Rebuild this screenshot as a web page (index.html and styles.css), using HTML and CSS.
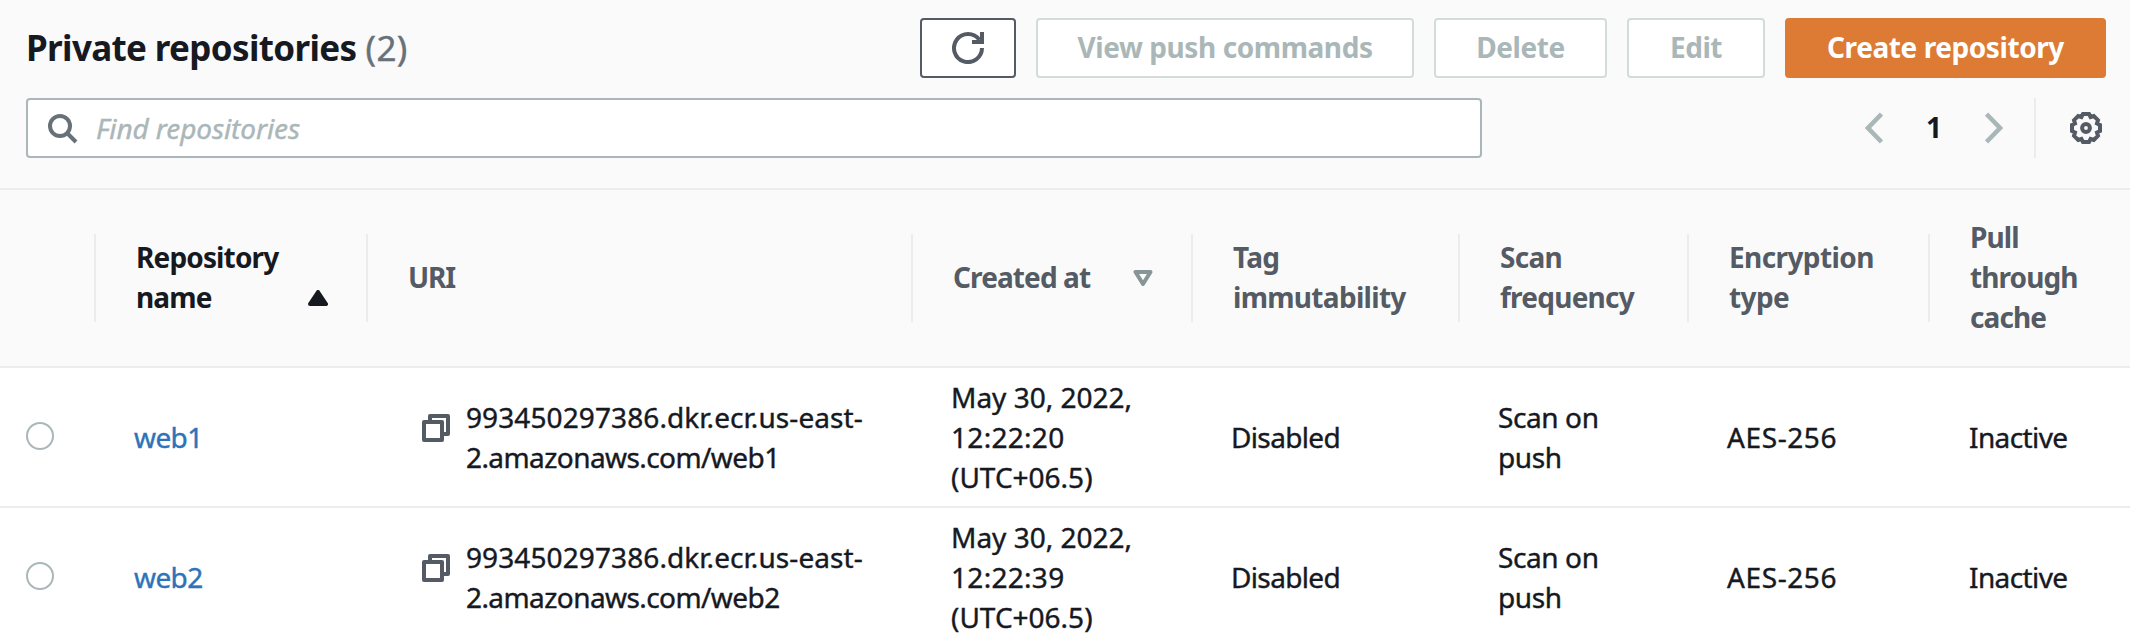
FILE: index.html
```
<!DOCTYPE html>
<html lang="en">
<head>
<meta charset="utf-8">
<title>Private repositories</title>
<link rel="stylesheet" href="styles.css">
</head>
<body>
<section class="panel">
  <header class="panel-header">
    <div class="title-row">
      <h1 class="title"><span class="title-name">Private repositories</span> <span class="count">(2)</span></h1>
      <div class="actions">
        <button class="btn btn-icon" aria-label="Refresh"><svg width="32" height="32" viewBox="0 0 16 16" fill="none" stroke="#545b64" stroke-width="2"><path d="M10 5h5V0"/><path d="M15 8a7 7 0 1 1-1.300-4.050"/></svg></button>
        <button class="btn btn-view">View push commands</button>
        <button class="btn btn-delete">Delete</button>
        <button class="btn btn-edit">Edit</button>
        <button class="btn btn-primary">Create repository</button>
      </div>
    </div>
    <div class="tools-row">
      <label class="search">
        <svg width="32" height="32" viewBox="0 0 16 16" fill="none" stroke="#687078" stroke-width="2"><circle cx="7" cy="7" r="5"/><path d="M15 15l-4.500-4.500"/></svg>
        <span class="placeholder">Find repositories</span>
      </label>
      <div class="pager">
        <svg class="prev" width="18" height="32" viewBox="0 0 18 32" fill="none" stroke="#aab7b8" stroke-width="4.600"><path d="M16.500 2L3 16l13.500 14"/></svg>
        <span class="page">1</span>
        <svg class="next" width="18" height="32" viewBox="0 0 18 32" fill="none" stroke="#aab7b8" stroke-width="4.600"><path d="M1.500 2L15 16 1.500 30"/></svg>
        <span class="pager-line"></span>
        <svg class="gear" width="32" height="32" viewBox="-16 -16 32 32" fill="none" stroke="#545b64" stroke-width="4"><path d="M14-3V3L11 4.600 12 7.800 7.800 12 4.600 11 3 14H-3L-4.600 11-7.800 12-12 7.800-11 4.600-14 3V-3L-11-4.600-12-7.800-7.800-12-4.600-11-3-14H3L4.600-11 7.800-12 12-7.800 11-4.600z"/><circle r="3.900"/></svg>
      </div>
    </div>
  </header>
  <div class="row head">
    <div class="cell"></div>
    <div class="cell sorted"><span class="h-name">Repository<br>name</span><svg class="caret-up" width="20" height="16" viewBox="0 0 20 16"><path d="M10 2l8 12H2z" fill="#16191f" stroke="#16191f" stroke-width="4" stroke-linejoin="round"/></svg></div>
    <div class="cell"><span class="h-uri">URI</span></div>
    <div class="cell"><span class="h-created">Created at</span><svg class="caret-down" width="20" height="16" viewBox="0 0 20 16"><path d="M2.500 2h15L10 14z" fill="none" stroke="#879596" stroke-width="4" stroke-linejoin="round"/></svg></div>
    <div class="cell"><span class="h-tag">Tag<br>immutability</span></div>
    <div class="cell"><span class="h-scan">Scan<br>frequency</span></div>
    <div class="cell"><span class="h-enc">Encryption<br>type</span></div>
    <div class="cell"><span class="h-pull">Pull<br>through<br>cache</span></div>
  </div>
  <div class="row">
    <div class="cell"><span class="radio"></span></div>
    <div class="cell"><a class="link">web1</a></div>
    <div class="cell uri"><svg width="28" height="28" viewBox="0 0 28 28" fill="none" stroke="#545b64" stroke-width="4" stroke-linejoin="round"><path d="M8 6V2h18v18h-4"/><path d="M2 8h18v18H2z"/></svg><span class="t-uri">993450297386.dkr.ecr.us-east-<br><span class="t-host">2.amazonaws.com/web1</span></span></div>
    <div class="cell"><span class="t-date">May 30, 2022,<br><span class="t-time">12:22:20</span><br>(UTC+06.5)</span></div>
    <div class="cell"><span class="t-tag">Disabled</span></div>
    <div class="cell"><span class="t-scan">Scan on<br>push</span></div>
    <div class="cell"><span class="t-enc">AES-256</span></div>
    <div class="cell"><span class="t-pull">Inactive</span></div>
  </div>
  <div class="row">
    <div class="cell"><span class="radio"></span></div>
    <div class="cell"><a class="link">web2</a></div>
    <div class="cell uri"><svg width="28" height="28" viewBox="0 0 28 28" fill="none" stroke="#545b64" stroke-width="4" stroke-linejoin="round"><path d="M8 6V2h18v18h-4"/><path d="M2 8h18v18H2z"/></svg><span class="t-uri">993450297386.dkr.ecr.us-east-<br><span class="t-host">2.amazonaws.com/web2</span></span></div>
    <div class="cell"><span class="t-date">May 30, 2022,<br><span class="t-time">12:22:39</span><br>(UTC+06.5)</span></div>
    <div class="cell"><span class="t-tag">Disabled</span></div>
    <div class="cell"><span class="t-scan">Scan on<br>push</span></div>
    <div class="cell"><span class="t-enc">AES-256</span></div>
    <div class="cell"><span class="t-pull">Inactive</span></div>
  </div>
</section>
</body>
</html>
```
FILE: styles.css
```
* { box-sizing: border-box; }
body {
  margin: 0;
  height: 640px;
  overflow: hidden;
  background: #fff;
  color: #16191f;
  font: 28px/40px "Noto Sans", sans-serif;
}
svg { display: block; flex: none; }
.panel-header {
  height: 190px;
  padding: 18px 24px 0 26px;
  background: #fafafa;
  border-bottom: 2px solid #eaeded;
}
.title-row { display: flex; justify-content: space-between; height: 60px; }
.title { margin: 0; font-size: 35px; line-height: 60px; font-weight: 700; white-space: nowrap; }
.title-name { letter-spacing: -0.65px; }
.count { color: #687078; font-weight: 400; letter-spacing: 0.3px; -webkit-text-stroke: 0.4px; }
.actions { display: flex; gap: 20px; }
.btn {
  display: flex;
  align-items: center;
  justify-content: center;
  height: 60px;
  padding: 0 0 2px;
  background: #fff;
  border: 2px solid #d5dbdb;
  border-radius: 4px;
  color: #aab7b8;
  font: 700 28px/40px "Noto Sans", sans-serif;
  letter-spacing: -0.42px;
  white-space: nowrap;
}
.btn-icon { width: 96px; padding: 0; border-color: #545b64; }
.btn-view { width: 378px; }
.btn-delete { width: 173px; }
.btn-edit { width: 138px; }
.btn-primary { width: 321px; background: #dd7a33; border-color: #dd7a33; color: #fff; }
.tools-row { display: flex; justify-content: space-between; margin-top: 20px; }
.search {
  display: flex;
  align-items: center;
  gap: 18px;
  width: 1456px;
  height: 60px;
  padding: 0 18px;
  background: #fff;
  border: 2px solid #aab7b8;
  border-radius: 4px;
}
.placeholder { color: #aab7b8; font-style: italic; letter-spacing: -0.1px; -webkit-text-stroke: 0.4px; }
.pager { display: flex; align-items: center; height: 60px; padding-right: 4px; }
.page { width: 102px; padding-bottom: 2px; text-align: center; font-weight: 700; }
.pager-line { width: 2px; height: 60px; margin: 0 34px 0 31px; background: #eaeded; }
.row {
  display: grid;
  grid-template-columns: 96px 272px 545px 280px 267px 229px 241px 200px;
  height: 140px;
  border-bottom: 2px solid #eaeded;
  -webkit-text-stroke: 0.4px;
}
.cell { display: flex; align-items: center; padding: 0 0 0 38px; white-space: nowrap; }
.cell:first-child { padding-left: 26px; }
.head {
  height: 178px;
  align-items: center;
  background: #fafafa;
  color: #545b64;
  font-weight: 700;
  -webkit-text-stroke: 0;
}
.head .cell { height: 88px; padding-left: 40px; border-right: 2px solid #eaeded; }
.head .cell:last-child { border-right: 0; }
.head .cell span { margin-top: -2px; }
.head .sorted { color: #16191f; }
.caret-up { margin: 40px 0 0 auto; }
.caret-down { margin-left: auto; }
.sorted { padding-right: 38px; }
.head .cell:nth-child(4) { padding-right: 38px; }
.h-name { letter-spacing: -0.85px; }
.h-uri { letter-spacing: -1.2px; }
.h-created { letter-spacing: -0.9px; }
.h-tag { letter-spacing: -0.7px; }
.h-scan { letter-spacing: -0.75px; }
.h-enc { letter-spacing: -0.6px; }
.h-pull { letter-spacing: -0.9px; }
.radio { width: 28px; height: 28px; margin-bottom: 2px; border: 2px solid #aab7b8; border-radius: 50%; }
.link { color: #2e73b8; letter-spacing: -0.6px; }
.uri { gap: 16px; padding-left: 54px; }
.uri svg { margin-bottom: 18px; }
.t-uri { letter-spacing: 0.1px; }
.t-host { letter-spacing: -0.58px; }
.t-time { letter-spacing: 0.3px; }
.t-tag { letter-spacing: -0.65px; }
.t-scan { letter-spacing: -0.4px; }
.t-enc { letter-spacing: 0.6px; }
.t-pull { padding-left: 1px; letter-spacing: -0.6px; }
```
